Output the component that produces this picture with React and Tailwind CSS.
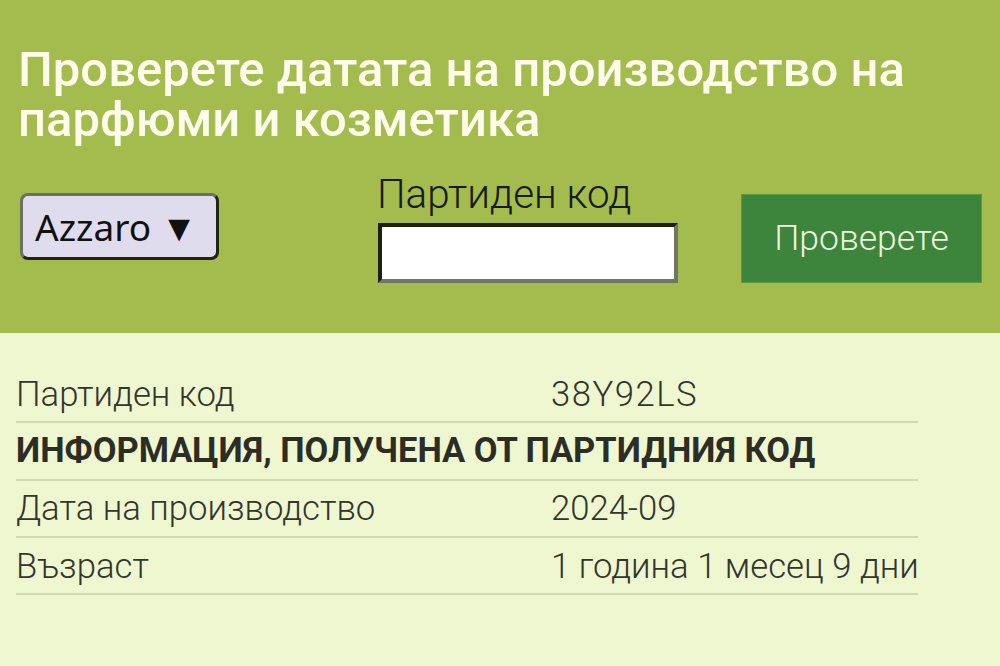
export default function App() {
  const rows = [
    { label: 'Партиден код', value: '38Y92LS', mono: true },
    { label: 'ИНФОРМАЦИЯ, ПОЛУЧЕНА ОТ ПАРТИДНИЯ КОД', head: true },
    { label: 'Дата на производство', value: '2024-09' },
    { label: 'Възраст', value: '1 година 1 месец 9 дни' },
  ];

  return (
    <div className="min-h-[666px] bg-[#eff7d1] font-['Roboto',sans-serif]">
      <div className="bg-[#a4bb4e] px-[18px] pt-[45px] h-[333px]">
        <h1 className="text-[49px] leading-[50px] font-medium text-[#fdfbe9]">
          <span className="block">Проверете датата на производство на</span>
          <span className="block">парфюми и козметика</span>
        </h1>
        <div className="mt-[28px] flex items-start">
          <div className="ml-[2px] mt-[20px] w-[199px] h-[67px] rounded-[8px] border-[3px] border-t-[#6b7060] border-l-[#6b7060] border-b-[#1f2416] border-r-[#1f2416] bg-[#dfdcee] flex items-center pl-[12px] font-['Noto_Sans',sans-serif] text-[37px] text-[#111]">
            Azzaro ▼
          </div>
          <div className="ml-[159px] flex flex-col">
            <span className="text-[40.4px] leading-[44px] font-light text-[#161a10] -ml-[1px]">Партиден код</span>
            <div className="mt-[6px] w-[300px] h-[60px] bg-white border-[4px] border-t-[#1c1f15] border-l-[#1c1f15] border-b-[#6e7664] border-r-[#6e7664]" />
          </div>
          <button className="ml-[63px] mt-[21px] w-[241px] h-[89px] bg-[#3d843c] border border-[#5a9a3e] text-[35.5px] font-light text-[#eef5dc] font-['Roboto',sans-serif]">
            Проверете
          </button>
        </div>
      </div>
      <div className="px-[16px] pt-[33px]">
        <div className="w-[902px]">
          {rows.map((r, i) => (
            <div key={i} className="flex h-[57.3px] items-center border-b-2 border-[#cfd9b0] text-[34.7px] font-light text-[#33352c] whitespace-nowrap">
              {r.head ? (
                <span className="font-bold text-[34.5px] text-[#2c2e26]">{r.label}</span>
              ) : (
                <>
                  <span className="w-[535px] shrink-0">{r.label}</span>
                  <span className={r.mono ? 'tracking-[1.5px]' : ''}>{r.value}</span>
                </>
              )}
            </div>
          ))}
        </div>
      </div>
    </div>
  );
}
